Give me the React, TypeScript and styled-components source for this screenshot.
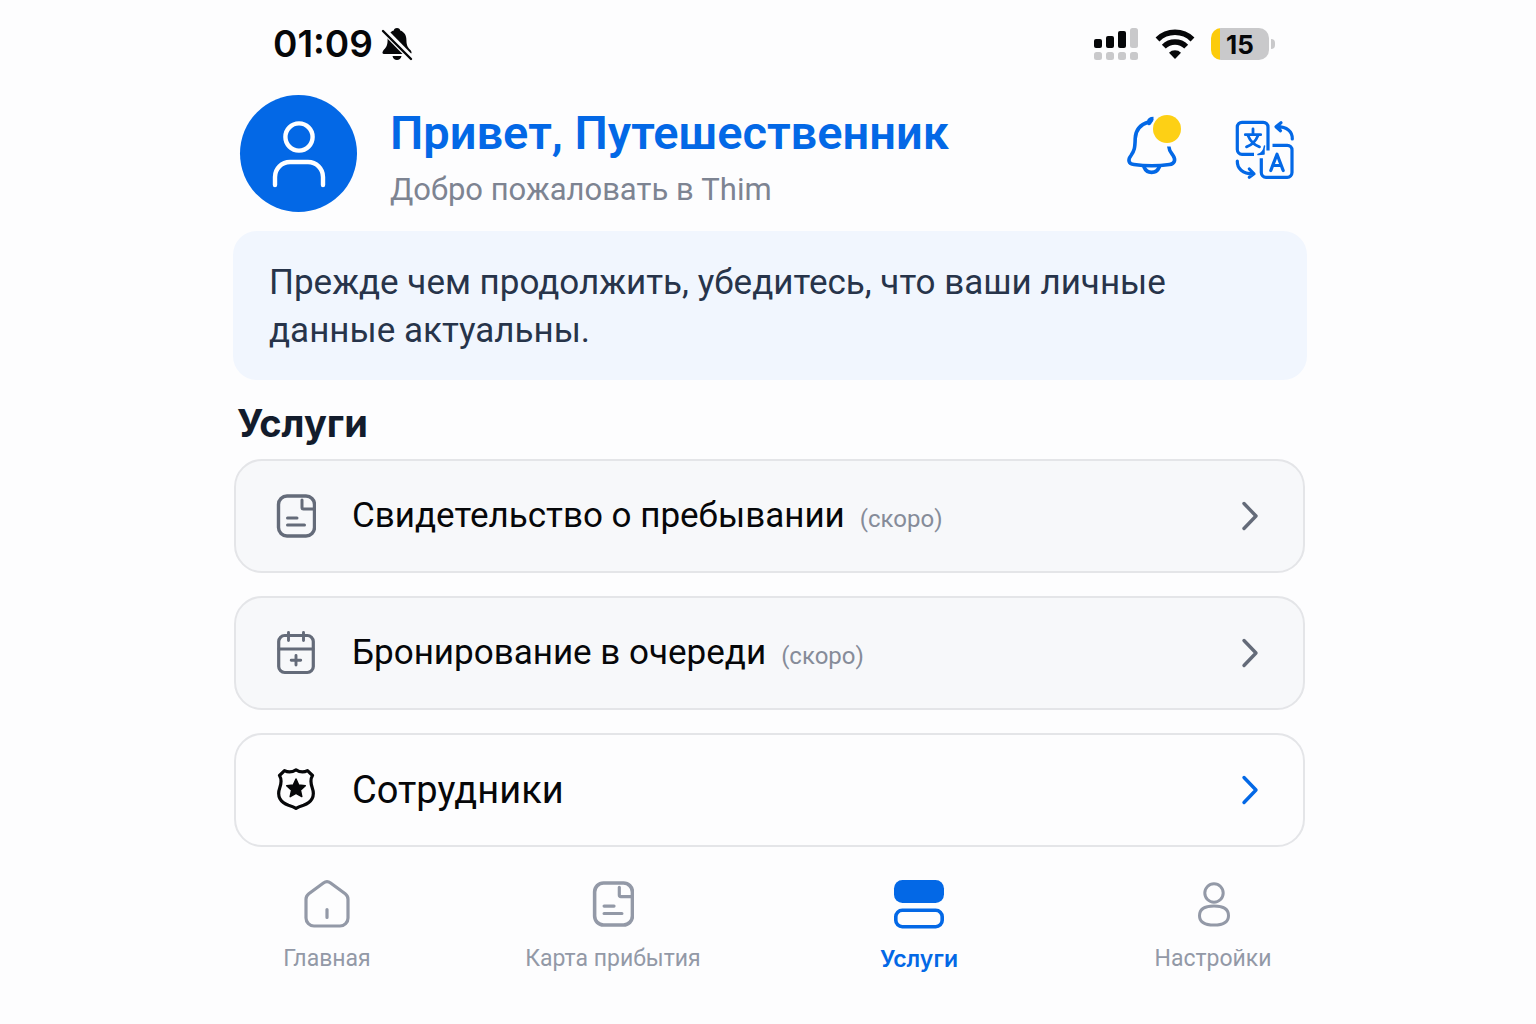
import React from "react";
import styled, { createGlobalStyle } from "styled-components";

const blue = "#0368e6";

const GlobalStyles = createGlobalStyle`
  * {
    box-sizing: border-box;
  }
  body {
    margin: 0px;
    background: #fdfdfe;
    color: #060709;
    font-family: Roboto, 'Liberation Sans', sans-serif;
  }
  h1, h2, p {
    margin: 0px;
  }
  svg {
    display: block;
    flex: none;
    fill: none;
    stroke-linecap: round;
    stroke-linejoin: round;
  }
`;

const Page = styled.div`
  min-height: 100vh;
  padding-left: 4px;
`;

const Column = styled.div`
  width: 100%;
  max-width: 1074px;
  margin: 0 auto;
`;

const StatusBar = styled.div`
  display: flex;
  align-items: center;
  justify-content: space-between;
  height: 88px;
  padding: 0 32px 0 40px;
  font-family: Inter, 'Liberation Sans', sans-serif;
`;

const StatusGroup = styled.div<{ $gap: number }>`
  display: flex;
  align-items: center;
  gap: ${props => props.$gap}px;
`;

const Time = styled.time`
  font-size: 37px;
  font-weight: 600;
  line-height: 48px;
`;

const Battery = styled.div`
  display: flex;
  align-items: center;
  gap: 2px;
  &::after {
    content: "";
    width: 4px;
    height: 10px;
    border-radius: 0 4px 4px 0;
    background: #c9c9cb;
  }
`;

const BatteryLevel = styled.div`
  width: 58px;
  height: 32px;
  border-radius: 10px;
  background: linear-gradient(to right, #fccb0b 16%, #c9c9cb 16%);
  font-size: 26px;
  font-weight: 700;
  line-height: 34px;
  text-align: center;
`;

const Header = styled.header`
  display: flex;
  align-items: center;
  padding: 7px 11px 0 7px;
`;

const Avatar = styled.div`
  display: flex;
  align-items: center;
  justify-content: center;
  flex: none;
  width: 117px;
  height: 117px;
  border-radius: 50%;
  background: ${blue};
`;

const Greeting = styled.div`
  flex: 1;
  padding: 3px 0 0 33px;
`;

const Name = styled.h1`
  color: ${blue};
  font-size: 47px;
  font-weight: 600;
  line-height: 70px;
`;

const Welcome = styled.p`
  color: #7d8492;
  font-size: 31px;
  line-height: 44px;
`;

const IconButton = styled.button`
  padding: 0;
  border: none;
  background: transparent;
  color: ${blue};
`;

const Actions = styled.div`
  display: flex;
  align-self: flex-start;
  gap: 48px;
  padding-top: 20px;
`;

const Notice = styled.p`
  margin-top: 19px;
  padding: 28px 36px 25px;
  border-radius: 24px;
  background: #f1f6fe;
  color: #27344a;
  font-size: 35px;
  line-height: 48px;
`;

const SectionTitle = styled.h2`
  padding: 19px 4px 12px;
  color: #131c2c;
  font-family: Inter, 'Liberation Sans', sans-serif;
  font-size: 38px;
  font-weight: 700;
  line-height: 48px;
`;

const Services = styled.div`
  display: flex;
  flex-direction: column;
  gap: 23px;
  padding: 0 2px 0 1px;
`;

const Card = styled.button<{ $soon?: boolean }>`
  display: flex;
  align-items: center;
  height: 114px;
  padding: 0 44px 0 40px;
  border: 2px solid #e4e5e8;
  border-radius: 28px;
  background: ${props => (props.$soon ? "#f7f8fa" : "#fdfdfe")};
  color: ${props => (props.$soon ? "#646b79" : blue)};
  font-family: inherit;
  font-size: ${props => (props.$soon ? 35 : 38)}px;
  text-align: left;
`;

const CardLabel = styled.span`
  flex: 1;
  padding-left: 36px;
  color: #060709;
  line-height: 48px;
`;

const Soon = styled.small`
  padding-left: 15px;
  color: #868c99;
  font-size: 24px;
  line-height: 24px;
`;

const TabBar = styled.nav`
  display: grid;
  grid-template-columns: 270fr 302fr 310fr 278fr;
  max-width: 1164px;
  margin: 0 auto;
  padding: 32px 0 32px 4px;
`;

const Tab = styled.a<{ $active?: boolean }>`
  display: flex;
  flex-direction: column;
  align-items: center;
  gap: 14px;
  color: ${props => (props.$active ? blue : "#9399a7")};
  font-family: ${props => (props.$active ? "Inter, sans-serif" : "inherit")};
  font-size: 23px;
  font-weight: ${props => (props.$active ? 600 : 400)};
  line-height: 32px;
  text-decoration: none;
`;

const BellOffIcon = () => (
  <svg width="32" height="34" viewBox="0 0 32 34">
    <path
      d="M16 1c-2 0-3 1.200-3.200 2.600C8.500 5 6.600 8.500 6.600 13c0 6.500-2.200 8-4.300 10.500C.8 25.500 1.400 27 3 27h26c1.600 0 2.200-1.500.8-3.500C27.500 21 25.400 19.500 25.400 13c0-4.500-2-8-6.200-9.400C19 2.200 18 1 16 1zM11.500 29h9c-.5 2.700-2.200 4-4.500 4s-4-1.300-4.500-4z"
      fill="#060709"
    />
    <path d="M2 2.500 31 32" stroke="#fdfdfe" strokeWidth="6.500" strokeLinecap="butt" />
    <path d="M2 4 30 32" stroke="#060709" strokeWidth="2.400" />
  </svg>
);

const SignalIcon = () => (
  <svg width="46" height="34" viewBox="0 0 46 34">
    <g fill="#060709">
      <rect x="1" y="12" width="8" height="9" rx="2" />
      <rect x="13" y="9" width="8" height="12" rx="2" />
      <rect x="25" y="4" width="8" height="17" rx="2" />
    </g>
    <g fill="#c9c9cb">
      <rect x="37" y="1" width="8" height="20" rx="2.500" />
      <rect x="1" y="25" width="8" height="8" rx="2.500" />
      <rect x="13" y="25" width="8" height="8" rx="2.500" />
      <rect x="25" y="25" width="8" height="8" rx="2.500" />
      <rect x="37" y="25" width="8" height="8" rx="2.500" />
    </g>
  </svg>
);

const WifiIcon = () => (
  <svg width="40" height="32" viewBox="0 0 40 32" stroke="#060709" strokeWidth="5.500">
    <g strokeLinecap="butt">
      <path d="M2.500 11.500a25 25 0 0 1 35 0" />
      <path d="M8.800 18.600a15.800 15.800 0 0 1 22.400 0" />
    </g>
    <path d="M20 31l-6-6.200a8.500 8.500 0 0 1 12 0z" fill="#060709" stroke="none" />
  </svg>
);

const PersonIcon = () => (
  <svg width="56" height="68" viewBox="0 0 56 68" stroke="#fff" strokeWidth="4.400">
    <circle cx="28" cy="17" r="13.600" />
    <path d="M4 65v-8a15 15 0 0 1 15-15h18a15 15 0 0 1 15 15v8" />
  </svg>
);

const BellIcon = () => (
  <svg width="60" height="68" viewBox="0 1 60 68" stroke="currentColor" strokeWidth="3.600">
    <path
      d="M27.500 4.500c-3 0-4.500 1-5 3.500C14.500 10.500 9.500 16 9.200 24.500 9 34 8.300 37 5 41.500c-3.500 4.500-2.500 8.500 3 9 11 1.600 24.500 1.600 35.500 0 5-.5 6.500-4.500 3.700-8.800-2.200-3.200-4.200-5.200-4.400-9.200"
      strokeLinecap="butt"
    />
    <path d="M23 9l2-3" strokeWidth="4.500" />
    <path d="M18 53c1.500 3.700 4 5.400 7.600 5.400s6.200-1.700 7.700-5.400" />
    <circle cx="41" cy="15" r="14" fill="#fdd015" stroke="none" />
  </svg>
);

const TranslateIcon = () => (
  <svg width="62" height="68" viewBox="0 -3 62 68" stroke="currentColor" strokeWidth="3.200">
    <path d="M20 36.300H8a4.700 4.700 0 0 1-4.700-4.700V9A4.700 4.700 0 0 1 8 4.300h21.300A4.700 4.700 0 0 1 34 9v23.500" strokeLinecap="butt" />
    <path d="M38.500 27.300h14.800A4.700 4.700 0 0 1 58 32v22.600a4.700 4.700 0 0 1-4.700 4.700H32a4.700 4.700 0 0 1-4.700-4.700V40.300" strokeLinecap="butt" />
    <path d="M30.500 28c-.5 4-3 7.500-6.500 8.500l6-.5v-5z" fill="currentColor" strokeWidth="1.500" />
    <path d="M19 11v4.500M11.300 16.700h15.400M24 17.500c-2.200 5.500-6 9.500-11.500 11.300M14 17.500c2.200 5.500 6 9.500 11.500 11.300" strokeWidth="2.800" />
    <path d="M36.800 52.500l6.200-16.300 6.200 16.300M39 47.500h8" strokeWidth="3.200" />
    <path d="M58.300 21c.2-7.500-5.300-12.500-15.800-12.300M47 4.700l-5 4 4.500 4" />
    <path d="M3.300 43c-.2 7.500 5.200 12.800 15.700 12.800M15.300 51l4.700 4.800-4.700 3.400" />
  </svg>
);

interface IconProps {
  width?: number;
  height?: number;
}

const DocumentIcon = ({ width = 40, height = 44 }: IconProps) => (
  <svg width={width} height={height} viewBox="0 0 40 44" stroke="currentColor" strokeWidth="3.400">
    <rect x="2.500" y="2" width="36" height="40" rx="8.500" />
    <path d="M26 6v7.500a1.500 1.500 0 0 0 1.500 1.500H37M11.500 24H21M11.500 31h17" strokeWidth="3" />
  </svg>
);

const CalendarIcon = () => (
  <svg width="40" height="44" viewBox="0 0 40 44" stroke="currentColor" strokeWidth="3.200">
    <rect x="2.700" y="4.500" width="34.600" height="37" rx="6" />
    <path d="M3 18h34M12.500 1.500v8M27.500 1.500v8M20 24.500v9.500M15.200 29.200h9.500" strokeWidth="2.900" />
  </svg>
);

const BadgeIcon = () => (
  <svg width="40" height="44" viewBox="0 2 40 44" stroke="#060709" strokeWidth="3.200">
    <path d="M20 3.800c-4 2.600-7.800 2.800-11.500.8L3.500 9.500c2.500 4 2 7.500.2 12.500-3 8.500.8 14.500 8.800 17.200 3.200 1 5.500 1.800 7.500 3.100 2-1.300 4.300-2.100 7.500-3.100 8-2.700 11.800-8.700 8.800-17.200C34.500 17 34 13.500 36.500 9.500l-5-4.900C27.800 6.600 24 6.400 20 3.800z" />
    <path
      d="M20 13l2.700 6 6.600.7-4.900 4.400 1.400 6.500-5.800-3.300-5.800 3.300 1.400-6.500-4.900-4.400 6.600-.7z"
      fill="#060709"
      strokeWidth="1.500"
    />
  </svg>
);

const HomeIcon = () => (
  <svg width="46" height="50" viewBox="0 -1 46 50" stroke="currentColor" strokeWidth="3.200">
    <path d="M19.400 3a6 6 0 0 1 7.200 0l14.600 10.700A7 7 0 0 1 44 19.300V38a8 8 0 0 1-8 8H10a8 8 0 0 1-8-8V19.300a7 7 0 0 1 2.800-5.600zM23 29.500v8" />
  </svg>
);

const ServicesIcon = () => (
  <svg width="52" height="50" viewBox="0 -1 52 50">
    <rect x="1" y="0" width="50" height="23" rx="8.500" fill="currentColor" />
    <rect x="2.800" y="30.300" width="46.400" height="16.400" rx="6.500" stroke="currentColor" strokeWidth="3.600" />
  </svg>
);

const SettingsIcon = () => (
  <svg width="34" height="50" viewBox="-1 -1 34 50" stroke="currentColor" strokeWidth="3">
    <circle cx="17" cy="13" r="9.200" />
    <path d="M17 26c-9 0-14.500 3.200-14.500 9.700S8 45 17 45s14.500-2.800 14.500-9.300S26 26 17 26z" />
  </svg>
);

const Chevron = () => (
  <svg width="18" height="32" viewBox="0 0 18 32" stroke="currentColor" strokeWidth="3.400">
    <path d="M3 3.500l12 12.500L3 28.500" />
  </svg>
);

const App: React.FC = () => (
  <Page>
    <GlobalStyles />
    <Column>
      <StatusBar>
        <StatusGroup $gap={8}>
          <Time>01:09</Time>
          <BellOffIcon />
        </StatusGroup>
        <StatusGroup $gap={16}>
          <SignalIcon />
          <WifiIcon />
          <Battery>
            <BatteryLevel>15</BatteryLevel>
          </Battery>
        </StatusGroup>
      </StatusBar>
      <Header>
        <Avatar>
          <PersonIcon />
        </Avatar>
        <Greeting>
          <Name>Привет, Путешественник</Name>
          <Welcome>Добро пожаловать в Thim</Welcome>
        </Greeting>
        <Actions>
          <IconButton type="button" aria-label="Уведомления">
            <BellIcon />
          </IconButton>
          <IconButton type="button" aria-label="Язык">
            <TranslateIcon />
          </IconButton>
        </Actions>
      </Header>
      <main>
        <Notice>Прежде чем продолжить, убедитесь, что ваши личные данные актуальны.</Notice>
        <SectionTitle>Услуги</SectionTitle>
        <Services>
          <Card type="button" $soon>
            <DocumentIcon />
            <CardLabel>
              Свидетельство о пребывании
              <Soon>(скоро)</Soon>
            </CardLabel>
            <Chevron />
          </Card>
          <Card type="button" $soon>
            <CalendarIcon />
            <CardLabel>
              Бронирование в очереди
              <Soon>(скоро)</Soon>
            </CardLabel>
            <Chevron />
          </Card>
          <Card type="button">
            <BadgeIcon />
            <CardLabel>Сотрудники</CardLabel>
            <Chevron />
          </Card>
        </Services>
      </main>
    </Column>
    <TabBar>
      <Tab href="#home">
        <HomeIcon />
        Главная
      </Tab>
      <Tab href="#arrival">
        <DocumentIcon width={42} height={50} />
        Карта прибытия
      </Tab>
      <Tab href="#services" $active>
        <ServicesIcon />
        Услуги
      </Tab>
      <Tab href="#settings">
        <SettingsIcon />
        Настройки
      </Tab>
    </TabBar>
  </Page>
);

export default App;
